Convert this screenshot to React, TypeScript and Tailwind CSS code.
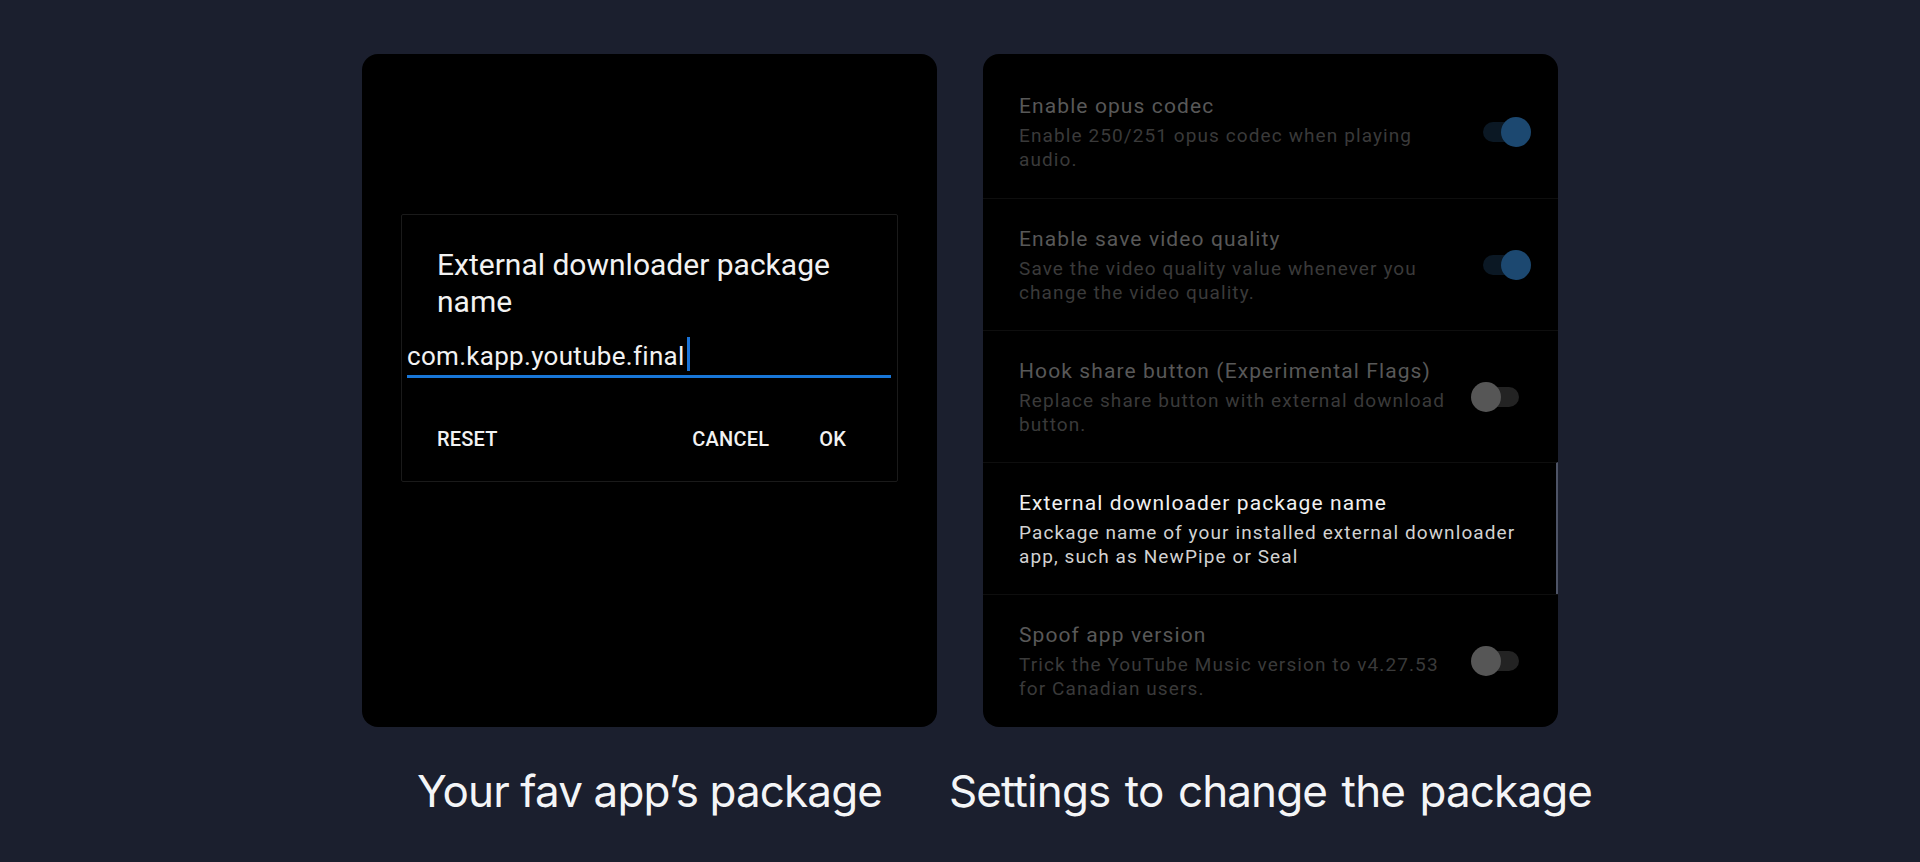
import React from 'react'

const ROWS = [
  { title: 'Enable opus codec', desc: 'Enable 250/251 opus codec when playing audio.', toggle: 'on' },
  { title: 'Enable save video quality', desc: 'Save the video quality value whenever you change the video quality.', toggle: 'on' },
  { title: 'Hook share button (Experimental Flags)', desc: 'Replace share button with external download button.', toggle: 'off' },
  { title: 'External downloader package name', desc: 'Package name of your installed external downloader app, such as NewPipe or Seal', toggle: null },
  { title: 'Spoof app version', desc: 'Trick the YouTube Music version to v4.27.53 for Canadian users.', toggle: 'off' },
] as const

function Toggle({ on }: { on: boolean }) {
  if (on) {
    return (
      <div className="relative w-[48px] h-[30px] mr-[27px] shrink-0">
        <div className="absolute left-0 top-[5px] w-[40px] h-[20px] rounded-full bg-[#0b1824]" />
        <div className="absolute right-0 top-0 w-[30px] h-[30px] rounded-full bg-[#1c4870]" />
      </div>
    )
  }
  return (
    <div className="relative w-[48px] h-[30px] mr-[39px] shrink-0">
      <div className="absolute right-0 top-[5px] w-[40px] h-[20px] rounded-full bg-[#232323]" />
      <div className="absolute left-0 top-0 w-[30px] h-[30px] rounded-full bg-[#565656]" />
    </div>
  )
}

export default function App() {
  return (
    <div className="w-full h-[862px] bg-[#1b1f2e] flex flex-col items-center pt-[54px]">
      <div className="flex gap-[46px]">
        {/* left: dialog screenshot */}
        <div className="w-[575px] h-[673px] rounded-[16px] bg-black pt-[160px] px-[39px] font-['Roboto',sans-serif]">
          <div className="border border-[#1a1a1a] rounded-[2px] h-[268px] pt-[31px] pb-[30px]">
            <h2 className="pl-[35px] pr-[30px] text-[30px] leading-[37px] text-[#f2f2f2]">External downloader package name</h2>
            <div className="mt-[21px] pl-[5px] pr-[5px]">
              <div className="flex items-center h-[30px] text-[26px] tracking-[0.3px] text-[#f2f2f2] leading-[30px]">
                com.kapp.youtube.final
                <span className="inline-block w-[3px] h-[34px] bg-[#1a73d6] ml-[2px] -mt-[4px]" />
              </div>
              <div className="mt-[4px] h-[3px] bg-[#1876d8] mr-[1px]" />
            </div>
            <div className="mt-[49px] flex items-center text-[20px] leading-[24px] font-medium tracking-[0.2px] text-[#f2f2f2] pl-[35px] pr-[51px]">
              <span>RESET</span>
              <span className="ml-auto">CANCEL</span>
              <span className="ml-[50px]">OK</span>
            </div>
          </div>
        </div>

        {/* right: settings list */}
        <div className="w-[575px] h-[673px] rounded-[16px] bg-black overflow-hidden pt-[12px] font-['Roboto',sans-serif]">
          {ROWS.map((r, i) => {
            const active = r.toggle === null
            return (
              <div key={r.title}
                className={`h-[132px] flex items-center pl-[36px] ${i > 0 ? 'border-t border-[#0e0e0e]' : ''} ${active ? 'border-r-2 border-r-[#4d5366]' : ''}`}>
                <div className={active ? 'w-[500px]' : 'w-[432px]'}>
                  <div className={`text-[21px] leading-[28px] tracking-[1.1px] ${active ? 'text-[#f0f0f0]' : 'text-[#585858]'}`}>{r.title}</div>
                  <div className={`mt-[4px] text-[19px] leading-[24px] tracking-[1.1px] ${active ? 'text-[#d2d2d2]' : 'text-[#3a3a3a]'}`}>{r.desc}</div>
                </div>
                {r.toggle && <div className="ml-auto"><Toggle on={r.toggle === 'on'} /></div>}
              </div>
            )
          })}
        </div>
      </div>

      <div className="flex gap-[46px] mt-[38px] font-['Inter',sans-serif] text-[#f4f5f7] text-[44px] leading-[52px] tracking-[-0.02em]">
        <p className="w-[575px] flex justify-center whitespace-nowrap">Your fav app’s package</p>
        <p className="w-[575px] flex justify-center whitespace-nowrap [word-spacing:3px]">Settings to change the package</p>
      </div>
    </div>
  )
}
